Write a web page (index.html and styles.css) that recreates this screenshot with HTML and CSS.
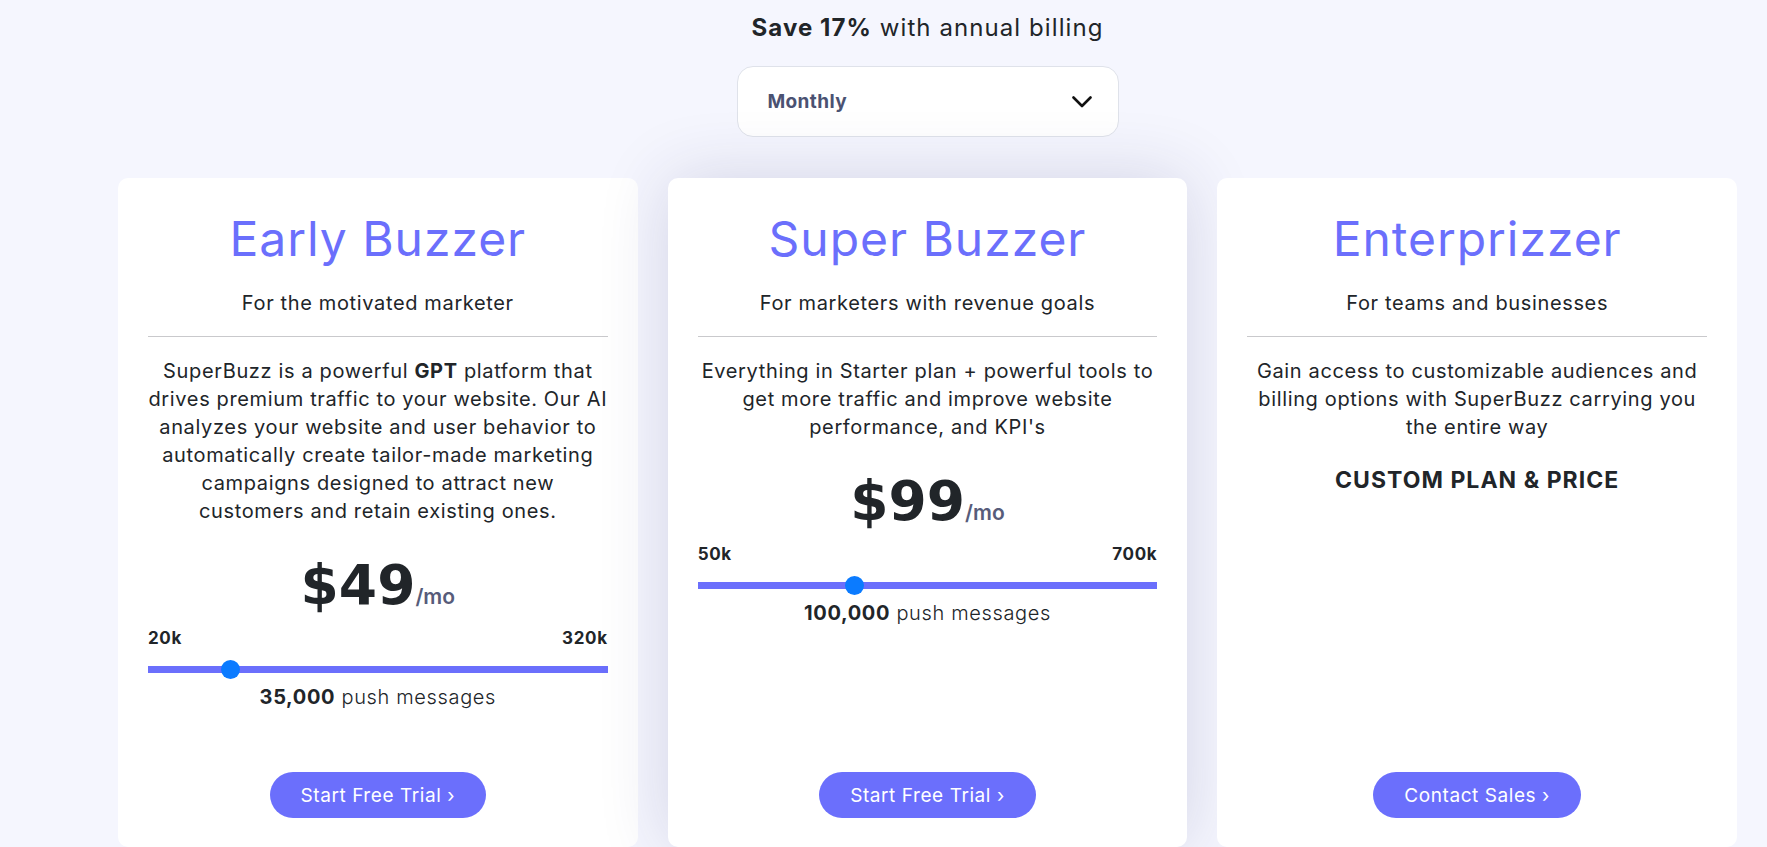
FILE: index.html
```html
<!DOCTYPE html>
<html lang="en">
<head>
  <meta charset="UTF-8" />
  <meta name="viewport" content="width=device-width, initial-scale=1.0"/>
  <title>SuperBuzz Pricing</title>
  <link rel="stylesheet" href="styles.css">
</head>
<body>

  <main class="pricing">
    <!-- billing toggle -->
    <p class="save-note"><strong>Save 17%</strong> with annual billing</p>
    <div class="billing-select">
      <span>Monthly</span>
      <svg width="20" height="12" viewBox="0 0 20 12">
        <polyline points="1.5,1.5 10,10 18.5,1.5" fill="none" stroke="#111" stroke-width="2.6" stroke-linecap="round" stroke-linejoin="round"/>
      </svg>
    </div>

    <!-- plans -->
    <section class="plans">
      <article class="plan">
        <h2 class="plan-name">Early Buzzer</h2>
        <p class="plan-tagline">For the motivated marketer</p>
        <hr>
        <p class="plan-desc">SuperBuzz is a powerful <b>GPT</b> platform that drives premium traffic to your website. Our AI analyzes your website and user behavior to automatically create tailor-made marketing campaigns designed to attract new customers and retain existing ones.</p>
        <div class="price">$49<span>/mo</span></div>
        <div class="range-labels"><span>20k</span><span>320k</span></div>
        <input type="range" class="volume" min="0" max="6" value="1">
        <p class="volume-note"><b>35,000</b> push messages</p>
        <a href="#" class="cta">Start Free Trial ›</a>
      </article>

      <article class="plan featured">
        <h2 class="plan-name">Super Buzzer</h2>
        <p class="plan-tagline">For marketers with revenue goals</p>
        <hr>
        <p class="plan-desc">Everything in Starter plan + powerful tools to get more traffic and improve website performance, and KPI's</p>
        <div class="price">$99<span>/mo</span></div>
        <div class="range-labels"><span>50k</span><span>700k</span></div>
        <input type="range" class="volume" min="0" max="3" value="1">
        <p class="volume-note"><b>100,000</b> push messages</p>
        <a href="#" class="cta">Start Free Trial ›</a>
      </article>

      <article class="plan">
        <h2 class="plan-name">Enterprizzer</h2>
        <p class="plan-tagline">For teams and businesses</p>
        <hr>
        <p class="plan-desc">Gain access to customizable audiences and billing options with SuperBuzz carrying you the entire way</p>
        <p class="custom-price">CUSTOM PLAN &amp; PRICE</p>
        <a href="#" class="cta">Contact Sales ›</a>
      </article>
    </section>
  </main>

</body>
</html>
```

FILE: styles.css
```css
body {
  font-family: "Inter", "Noto Sans", sans-serif;
  margin: 0;
  padding: 0;
  background: #f5f6fe;
  color: #212529;
}

.pricing {
  padding: 12px 30px 0 118px;
  display: flex;
  flex-direction: column;
  align-items: center;
}

.save-note {
  margin: 0;
  font-size: 24px;
  line-height: 32px;
  letter-spacing: 0.045em;
}

.save-note strong {
  font-weight: 700;
}

.billing-select {
  margin: 22px 0 41px;
  width: 382px;
  height: 71px;
  box-sizing: border-box;
  padding: 0 26px 0 30px;
  display: flex;
  align-items: center;
  justify-content: space-between;
  background: #fff;
  border: 1px solid #dfe2ea;
  border-radius: 16px;
  font-size: 19px;
  font-weight: 700;
  color: #4b5272;
  letter-spacing: 0.02em;
}

.plans {
  align-self: stretch;
  display: grid;
  grid-template-columns: repeat(3, 1fr);
  gap: 30px;
}

.plan {
  min-height: 669px;
  box-sizing: border-box;
  padding: 32px 30px 29px;
  background: #fff;
  border-radius: 10px;
  display: flex;
  flex-direction: column;
  text-align: center;
  letter-spacing: 0.04em;
}

.plan.featured {
  box-shadow: 0 0 70px rgba(40, 40, 100, 0.16);
}

.plan-name {
  margin: 0;
  font-size: 48px;
  line-height: 58px;
  font-weight: 400;
  color: #6b6ffc;
  letter-spacing: 0.02em;
}

.plan-tagline {
  margin: 21px 0 0;
  font-size: 20px;
  line-height: 28px;
}

.plan hr {
  width: 100%;
  margin: 19px 0 0;
  border: none;
  border-top: 1px solid #c9c9cc;
}

.plan-desc {
  margin: 20px 0 0;
  font-size: 20px;
  line-height: 28px;
}

.plan-desc b {
  font-weight: 700;
}

.price {
  margin-top: 33px;
  font-family: "DejaVu Sans", sans-serif;
  font-size: 55px;
  line-height: 55px;
  font-weight: 700;
  letter-spacing: 0;
}

.price span {
  font-family: "Inter", sans-serif;
  font-size: 21px;
  font-weight: 600;
  color: #575c7a;
}

.range-labels {
  margin-top: 2px;
  display: flex;
  justify-content: space-between;
  font-size: 17px;
  line-height: 24px;
  font-weight: 700;
}

.volume {
  -webkit-appearance: none;
  appearance: none;
  width: 100%;
  height: 19px;
  margin: 10px 0 0;
  background: transparent;
}

.volume::-webkit-slider-runnable-track {
  height: 7px;
  background: #6b6ffc;
}

.volume::-webkit-slider-thumb {
  -webkit-appearance: none;
  width: 19px;
  height: 19px;
  margin-top: -6px;
  border: none;
  border-radius: 50%;
  background: #0b7bff;
}

.volume-note {
  margin: 4px 0 0;
  font-size: 20px;
  line-height: 28px;
  font-weight: 300;
}

.volume-note b {
  font-weight: 700;
}

.custom-price {
  margin: 24px 0 0;
  font-size: 23px;
  line-height: 30px;
  font-weight: 700;
  letter-spacing: 0.045em;
}

.cta {
  margin-top: auto;
  align-self: center;
  height: 46px;
  padding: 0 31px;
  display: flex;
  align-items: center;
  background: #6b6ffc;
  color: #fff;
  border-radius: 23px;
  font-size: 19px;
  text-decoration: none;
  letter-spacing: 0.03em;
}
```
